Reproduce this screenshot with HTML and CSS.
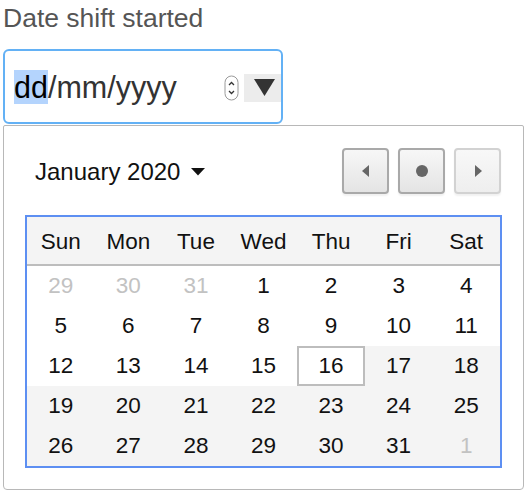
FILE: index.html
```html
<!DOCTYPE html>
<html>
<head>
<meta charset="utf-8">
<link rel="stylesheet" href="styles.css">
</head>
<body>
<div class="field">
  <div class="label">Date shift started</div>
  <div class="input">
    <span class="value"><span class="sel">dd</span><span class="rest">/mm/yyyy</span></span>
    <span class="spin">
      <svg width="15" height="26" viewBox="0 0 15 26"><rect x="1" y="1" width="13" height="24" rx="6.5" fill="#fff" stroke="#9a9a9a"/><path d="M5 10 L7.5 7.5 L10 10" fill="none" stroke="#333" stroke-width="1.3"/><path d="M5 16 L7.5 18.5 L10 16" fill="none" stroke="#333" stroke-width="1.3"/></svg>
    </span>
    <span class="drop"><svg width="22" height="17" viewBox="0 0 22 17"><path d="M0 0 H21 L10.5 17 Z" fill="#333"/></svg></span>
  </div>
  <div class="popup">
    <div class="head">
      <div class="month">January 2020 <svg class="caret" width="14" height="8" viewBox="0 0 14 8"><path d="M0 0 H14 L7 7.5 Z" fill="#111"/></svg></div>
      <div class="navs">
        <button class="nav"><svg width="10" height="14" viewBox="0 0 10 14"><path d="M8 1 V13 L1 7 Z" fill="#666"/></svg></button>
        <button class="nav"><svg width="14" height="14" viewBox="0 0 14 14"><circle cx="7" cy="7" r="6" fill="#666"/></svg></button>
        <button class="nav dim"><svg width="10" height="14" viewBox="0 0 10 14"><path d="M2 1 V13 L9 7 Z" fill="#666"/></svg></button>
      </div>
    </div>
    <div class="cal">
      <div class="dow">Sun</div><div class="dow">Mon</div><div class="dow">Tue</div><div class="dow">Wed</div><div class="dow">Thu</div><div class="dow">Fri</div><div class="dow">Sat</div>
      <div class="d out">29</div><div class="d out">30</div><div class="d out">31</div><div class="d">1</div><div class="d">2</div><div class="d">3</div><div class="d">4</div>
      <div class="d">5</div><div class="d">6</div><div class="d">7</div><div class="d">8</div><div class="d">9</div><div class="d">10</div><div class="d">11</div>
      <div class="d">12</div><div class="d">13</div><div class="d">14</div><div class="d">15</div><div class="d today">16</div><div class="d g">17</div><div class="d g">18</div>
      <div class="d g">19</div><div class="d g">20</div><div class="d g">21</div><div class="d g">22</div><div class="d g">23</div><div class="d g">24</div><div class="d g">25</div>
      <div class="d g">26</div><div class="d g">27</div><div class="d g">28</div><div class="d g">29</div><div class="d g">30</div><div class="d g">31</div><div class="d g out">1</div>
    </div>
  </div>
</div>
</body>
</html>
```

FILE: styles.css
```css
html, body {
  margin: 0;
  padding: 0;
  background: #fff;
}
body {
  font-family: "Liberation Sans", Arial, sans-serif;
  color: #111;
}
.field {
  padding-left: 3px;
  padding-top: 3px;
}
.label {
  font-size: 26.5px;
  line-height: 30px;
  color: #555;
}
.input {
  box-sizing: border-box;
  margin-top: 16px;
  width: 280px;
  height: 75px;
  border: 2px solid #63b1f5;
  border-radius: 6px;
  display: flex;
  align-items: center;
  padding-left: 9px;
}
.value {
  font-size: 30.5px;
  line-height: 35px;
  color: #333;
  flex: 1;
  padding-top: 1px;
}
.sel {
  background: #b4d4fd;
  color: #000;
}
.spin {
  display: flex;
  margin-right: 5px;
  margin-top: 2px;
}
.drop {
  width: 37px;
  height: 28px;
  background: #ececec;
  display: flex;
  align-items: center;
  padding-left: 10px;
  box-sizing: border-box;
  margin-top: 2px;
}
.popup {
  box-sizing: border-box;
  margin-top: 1px;
  width: 521px;
  height: 365px;
  border: 1px solid #b8b8b8;
  border-radius: 2px 2px 4px 4px;
  padding: 21px 21px 0 21px;
}
.head {
  display: flex;
  justify-content: space-between;
  align-items: center;
  height: 47px;
  padding-left: 10px;
}
.month {
  font-size: 24px;
  display: flex;
  align-items: center;
  gap: 11px;
  margin-top: 2px;
}
.navs {
  display: flex;
  gap: 9px;
  margin-right: 1px;
}
.nav {
  width: 47px;
  height: 46px;
  box-sizing: border-box;
  border: 2px solid #a9a9a9;
  border-radius: 4px;
  background: linear-gradient(#f7f7f7, #e4e4e4);
  box-shadow: 0 2px 2px rgba(0,0,0,0.06);
  display: flex;
  align-items: center;
  justify-content: center;
  padding: 0;
}
.nav.dim {
  border-color: #d2d2d2;
  background: linear-gradient(#f8f8f8, #eeeeee);
}
.cal {
  margin-top: 21px;
  box-sizing: border-box;
  width: 477px;
  border: 2px solid #5d8ff2;
  display: grid;
  grid-template-columns: repeat(7, 1fr);
}
.dow {
  background: #f4f4f4;
  height: 49px;
  border-bottom: 2px solid #bdbdbd;
  display: flex;
  align-items: center;
  justify-content: center;
  font-size: 22.5px;
  padding-top: 3px;
  box-sizing: border-box;
}
.d {
  height: 40px;
  display: flex;
  align-items: center;
  justify-content: center;
  font-size: 22.5px;
  color: #111;
  box-sizing: border-box;
}
.d.g {
  background: #f4f4f4;
}
.d.out {
  color: #c2c2c2;
}
.d.today {
  border: 2px solid #bdbdbd;
}
```
